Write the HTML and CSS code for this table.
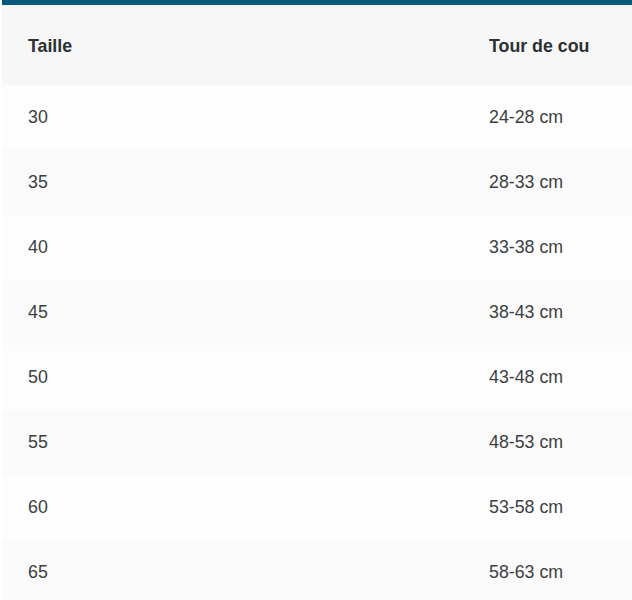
FILE: index.html
```html
<!DOCTYPE html>
<html lang="fr">
<head>
<meta charset="utf-8">
<title>Tableau des tailles</title>
<link rel="stylesheet" href="styles.css">
</head>
<body>
<table class="size-table">
  <thead>
    <tr><th>Taille</th><th>Tour de cou</th></tr>
  </thead>
  <tbody>
    <tr><td>30</td><td>24-28 cm</td></tr>
    <tr><td>35</td><td>28-33 cm</td></tr>
    <tr><td>40</td><td>33-38 cm</td></tr>
    <tr><td>45</td><td>38-43 cm</td></tr>
    <tr><td>50</td><td>43-48 cm</td></tr>
    <tr><td>55</td><td>48-53 cm</td></tr>
    <tr><td>60</td><td>53-58 cm</td></tr>
    <tr><td>65</td><td>58-63 cm</td></tr>
  </tbody>
</table>
</body>
</html>
```
FILE: styles.css
```css
html, body {
  margin: 0;
  padding: 0;
  background: #ffffff;
}
.size-table {
  margin-left: 2px;
  width: 630px;
  border-collapse: separate;
  border-spacing: 0;
  border-top: 5px solid #045a7b;
  font-family: "Liberation Sans", Arial, sans-serif;
  font-size: 17.8px;
  color: #3b3f42;
}
.size-table th,
.size-table td {
  text-align: left;
  padding: 0 0 0 26px;
  vertical-align: middle;
}
.size-table th:first-child,
.size-table td:first-child {
  width: 435px;
}
.size-table thead tr {
  height: 80px;
  background: #f7f7f7;
}
.size-table th {
  font-weight: bold;
  color: #2c3033;
  padding-top: 2px;
}
.size-table tbody tr {
  height: 65px;
  background: #fdfdfd;
}
.size-table tbody tr:nth-child(even) {
  background: #fafafa;
}
```
